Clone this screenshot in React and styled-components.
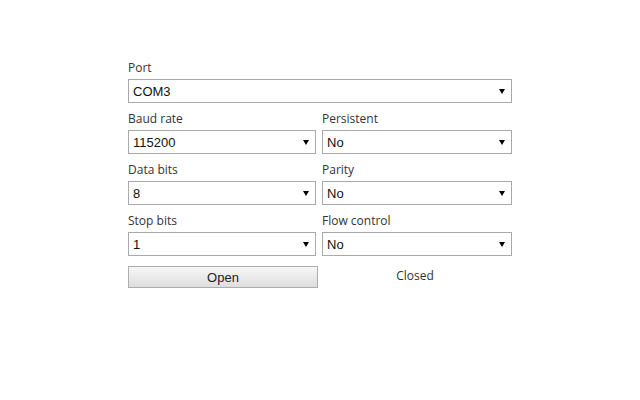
import React, { useState } from "react";
import styled, { createGlobalStyle } from "styled-components";

const GlobalStyle = createGlobalStyle`
  html, body {
    margin: 0;
    padding: 0;
    background: #ffffff;
  }
  body {
    font-family: "Open Sans", "Noto Sans", sans-serif;
  }
`;

const Form = styled.div`
  width: 384px;
  margin: 0 auto;
  padding-top: 60px;
  display: grid;
  grid-template-columns: 190px 190px;
  column-gap: 4px;
`;

const Field = styled.div`
  grid-column: ${(p) => (p.wide ? "1 / span 2" : "auto")};
  display: flex;
  flex-direction: column;
  margin-bottom: 8px;
`;

const Label = styled.label`
  font-family: "Open Sans", "Noto Sans", sans-serif;
  font-size: 12px;
  line-height: 16px;
  color: #333333;
  margin-bottom: 3px;
`;

const SelectWrap = styled.div`
  position: relative;
  height: 24px;
  width: ${(p) => (p.narrow ? "188px" : "100%")};

  &::after {
    content: "";
    position: absolute;
    right: 7px;
    top: 10px;
    border-left: 3px solid transparent;
    border-right: 3px solid transparent;
    border-top: 5px solid #000000;
    pointer-events: none;
  }
`;

const Select = styled.select`
  appearance: none;
  -webkit-appearance: none;
  display: block;
  width: 100%;
  height: 24px;
  box-sizing: border-box;
  border: 1px solid #a9a9a9;
  border-radius: 0;
  background: #ffffff;
  padding: 0 18px 0 4px;
  font-family: "Liberation Sans", Arial, sans-serif;
  font-size: 13px;
  color: #111111;
  outline: none;
`;

const Actions = styled.div`
  grid-column: 1 / span 2;
  display: grid;
  grid-template-columns: 190px 190px;
  column-gap: 4px;
  align-items: center;
  margin-top: 2px;
`;

const Button = styled.button`
  height: 22px;
  box-sizing: border-box;
  border: 1px solid #adadad;
  border-radius: 0;
  background: linear-gradient(#f6f6f6, #dedede);
  font-family: "Liberation Sans", Arial, sans-serif;
  font-size: 13px;
  font-weight: 400;
  color: #222222;
  padding: 0;
`;

const Status = styled.div`
  text-align: center;
  font-family: "Open Sans", "Noto Sans", sans-serif;
  font-size: 12px;
  color: #333333;
  margin-top: -4px;
  padding-right: 4px;
`;

const fields = [
  { id: "port", label: "Port", value: "COM3", options: ["COM1", "COM3"], wide: true },
  { id: "baud", label: "Baud rate", value: "115200", options: ["9600", "57600", "115200"] },
  { id: "persistent", label: "Persistent", value: "No", options: ["No", "Yes"] },
  { id: "data", label: "Data bits", value: "8", options: ["7", "8"] },
  { id: "parity", label: "Parity", value: "No", options: ["No", "Odd", "Even"] },
  { id: "stop", label: "Stop bits", value: "1", options: ["1", "2"] },
  { id: "flow", label: "Flow control", value: "No", options: ["No", "Hardware"] },
];

const App = () => {
  const [values, setValues] = useState(
    Object.fromEntries(fields.map((f) => [f.id, f.value]))
  );
  const [open, setOpen] = useState(false);

  return (
    <>
      <GlobalStyle />
      <Form>
        {fields.map((f, i) => (
          <Field key={f.id} wide={f.wide}>
            <Label htmlFor={f.id}>{f.label}</Label>
            <SelectWrap narrow={!f.wide && i % 2 === 1}>
              <Select
                id={f.id}
                value={values[f.id]}
                onChange={(e) => setValues({ ...values, [f.id]: e.target.value })}
              >
                {f.options.map((o) => (
                  <option key={o}>{o}</option>
                ))}
              </Select>
            </SelectWrap>
          </Field>
        ))}
        <Actions>
          <Button onClick={() => setOpen(!open)}>{open ? "Close" : "Open"}</Button>
          <Status>{open ? "Open" : "Closed"}</Status>
        </Actions>
      </Form>
    </>
  );
};

export default App;
